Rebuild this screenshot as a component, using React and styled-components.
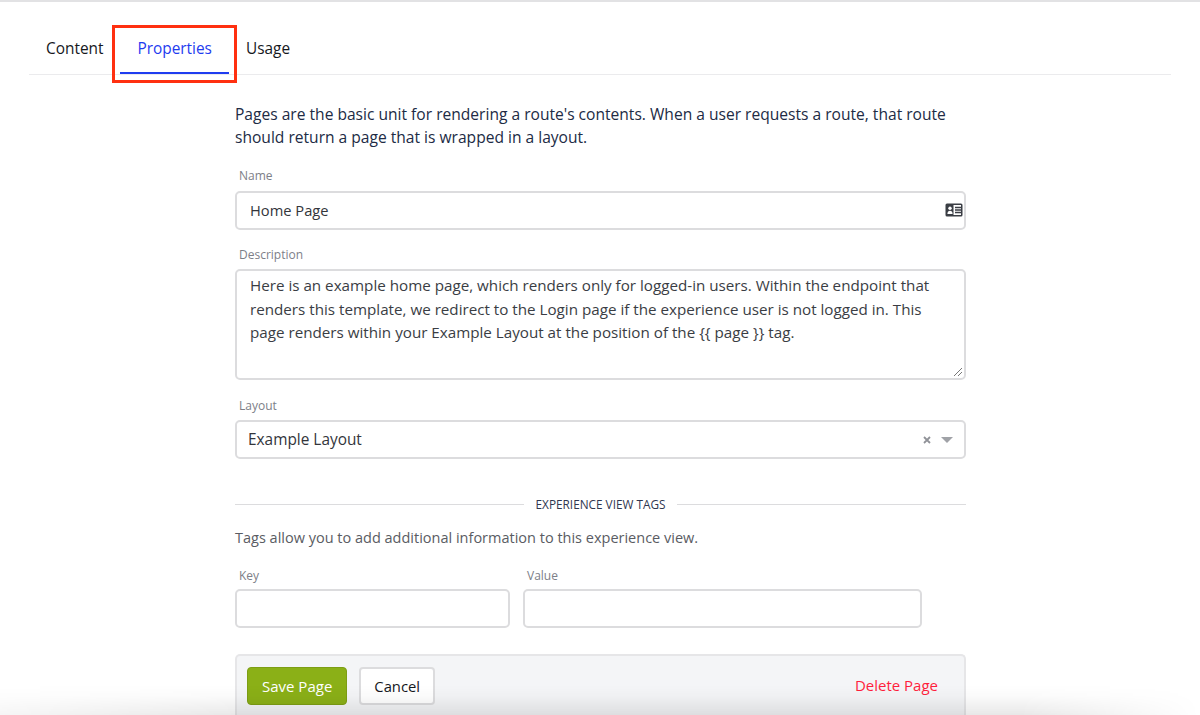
import React from "react";
import styled, { createGlobalStyle } from "styled-components";

const Global = createGlobalStyle`
  html, body { margin: 0; padding: 0; background: #fff; height: 100%; overflow: hidden; }
  body { font-family: "Open Sans", "Noto Sans", "Liberation Sans", sans-serif; }
  * { box-sizing: border-box; }
`;
const Page = styled.div`
  position: relative;
  width: 1200px;
  height: 715px;
  overflow: hidden;
  border-top: 2px solid #e2e2e4;
  background: #fff;
`;
const TabBar = styled.nav`
  display: flex;
  margin: 0 29px;
  height: 73px;
  border-bottom: 1px solid #ebebed;
`;
const Tab = styled.div`
  position: relative;
  padding: 37px 17px 0;
  font-size: 15.4px;
  line-height: 20px;
  color: ${p => (p.$active ? "#1f3cf0" : "#16181d")};
  &::after {
    content: "";
    display: ${p => (p.$active ? "block" : "none")};
    position: absolute;
    left: 0; right: 0; bottom: 0;
    height: 2px;
    background: #1f3cf0;
  }
`;
const Highlight = styled.div`
  position: absolute;
  left: 112px; top: 23px;
  width: 125px; height: 58px;
  border: 3px solid #ff3010;
`;
const Form = styled.main`
  width: 731px;
  margin: 0 0 0 235px;
  padding-top: 28px;
`;
const Intro = styled.p`
  margin: 0 0 19px;
  font-size: 15.58px;
  line-height: 23px;
  color: #212b45;
`;
const Label = styled.label`
  display: block;
  margin-left: 4px;
  margin-bottom: ${p => p.$gap ?? 7}px;
  font-size: 12px;
  line-height: 16px;
  color: #7d8088;
`;
const Field = styled.div`
  margin-bottom: ${p => p.$mb ?? 17}px;
`;
const InputBox = styled.div`
  display: flex;
  align-items: center;
  justify-content: space-between;
  height: 39px;
  padding: 0 ${p => p.$pr ?? 1}px ${p => p.$pb ?? 2}px ${p => p.$pl ?? 13}px;
  border: 2px solid #dcdcde;
  border-radius: 5px;
  background: #fff;
  font-size: ${p => p.$fs || 14.7}px;
  color: #33353b;
`;
const TextArea = styled.div`
  position: relative;
  height: 111px;
  padding: 3px 13px;
  border: 2px solid #dcdcde;
  border-radius: 5px;
  font-size: 15.2px;
  line-height: 23.6px;
  color: #3a3d44;
`;
const Grip = styled.svg`
  position: absolute;
  right: 1px; bottom: 1px;
`;
const Icons = styled.div`
  display: flex;
  align-items: center;
  gap: 10px;
  padding-right: 11px;
`;
const Divider = styled.div`
  display: flex;
  align-items: center;
  gap: 12px;
  margin-top: 35px;
  font-size: 11.8px;
  line-height: 20px;
  color: #2e3650;
  &::before, &::after {
    content: "";
    flex: 1;
    height: 1px;
    background: #dcdcde;
  }
`;
const Help = styled.p`
  margin: 13px 0 0;
  font-size: 14.5px;
  line-height: 22px;
  color: #5a5c63;
`;
const TagRow = styled.div`
  display: flex;
  gap: 13px;
  margin-top: 19px;
`;
const TagField = styled.div`
  width: ${p => p.$w}px;
`;
const Footer = styled.div`
  display: flex;
  align-items: center;
  gap: 12px;
  height: 70px;
  margin-top: 26px;
  padding: 11px 26px 19px 10px;
  background: #f4f5f7;
  border: 2px solid #e6e6e8;
  border-bottom: 0;
  border-radius: 5px 5px 0 0;
`;
const Button = styled.button`
  height: 38px;
  padding: 0 ${p => (p.$primary ? 14 : 13)}px;
  font: inherit;
  font-size: ${p => (p.$primary ? 15 : 14.8)}px;
  border-radius: 4px;
  border: ${p => (p.$primary ? "1px solid #7d9e14" : "2px solid #dcdcde")};
  background: ${p => (p.$primary ? "#8bb017" : "#fff")};
  color: ${p => (p.$primary ? "#fff" : "#16181d")};
`;
const Danger = styled.span`
  margin-left: auto;
  padding-bottom: 2px;
  font-size: 15px;
  color: #ff1f3d;
`;
const BottomShade = styled.div`
  position: absolute;
  left: 0; right: 0; bottom: 0;
  height: 30px;
  pointer-events: none;
  background: linear-gradient(to bottom, rgba(0,0,0,0), rgba(0,0,0,0.02) 40%, rgba(0,0,0,0.09));
  -webkit-mask-image: linear-gradient(to right, rgba(0,0,0,.4) 0, #000 20%, #000 85%, transparent 100%);
  mask-image: linear-gradient(to right, rgba(0,0,0,.4) 0, #000 20%, #000 85%, transparent 100%);
`;

const IdCard = () => (
  <svg width="18" height="14" viewBox="0 0 18 14">
    <rect x="0.5" y="0.5" width="17" height="13" rx="1.5" fill="#3b3e45" />
    <rect x="2" y="2" width="14" height="10" fill="#fff" />
    <rect x="1.5" y="1.5" width="7" height="11" fill="#3b3e45" />
    <circle cx="5" cy="5.2" r="1.7" fill="#fff" />
    <path d="M2.4 11c0-2.2 1.2-3.2 2.6-3.2S7.6 8.8 7.6 11z" fill="#fff" />
    <path d="M10 4.5h6M10 7h6M10 9.5h6" stroke="#3b3e45" strokeWidth="1.3" />
  </svg>
);

export default function App() {
  return (
    <Page>
      <Global />
      <TabBar>
        <Tab>Content</Tab>
        <Tab $active>Properties</Tab>
        <Tab>Usage</Tab>
      </TabBar>
      <Highlight />
      <Form>
        <Intro>
          Pages are the basic unit for rendering a route's contents. When a user requests a route, that route
          <br />
          should return a page that is wrapped in a layout.
        </Intro>
        <Field>
          <Label>Name</Label>
          <InputBox>
            Home Page
            <IdCard />
          </InputBox>
        </Field>
        <Field $mb={18}>
          <Label $gap={6}>Description</Label>
          <TextArea>
            Here is an example home page, which renders only for logged-in users. Within the endpoint that
            <br />
            renders this template, we redirect to the Login page if the experience user is not logged in. This
            <br />
            page renders within your Example Layout at the position of the {"{{ page }}"} tag.
            <Grip width="10" height="10" viewBox="0 0 10 10">
              <path d="M1 9 9 1M5 9l4-4" stroke="#777" strokeWidth="1" />
            </Grip>
          </TextArea>
        </Field>
        <Field $mb={0}>
          <Label $gap={6}>Layout</Label>
          <InputBox $pl={11} $pr={0} $pb={0} $fs={15.4}>
            Example Layout
            <Icons>
              <svg width="8" height="8" viewBox="0 0 8 8">
                <path d="M1 1l6 6M7 1l-6 6" stroke="#909298" strokeWidth="1.8" />
              </svg>
              <svg width="12" height="6" viewBox="0 0 12 6">
                <path d="M0 0h12L6 6z" fill="#a0a2a7" />
              </svg>
            </Icons>
          </InputBox>
        </Field>
        <Divider>EXPERIENCE VIEW TAGS</Divider>
        <Help>Tags allow you to add additional information to this experience view.</Help>
        <TagRow>
          <TagField $w={275}>
            <Label $gap={5}>Key</Label>
            <InputBox />
          </TagField>
          <TagField $w={399}>
            <Label $gap={5}>Value</Label>
            <InputBox />
          </TagField>
        </TagRow>
        <Footer>
          <Button $primary>Save Page</Button>
          <Button>Cancel</Button>
          <Danger>Delete Page</Danger>
        </Footer>
      </Form>
      <BottomShade />
    </Page>
  );
}
